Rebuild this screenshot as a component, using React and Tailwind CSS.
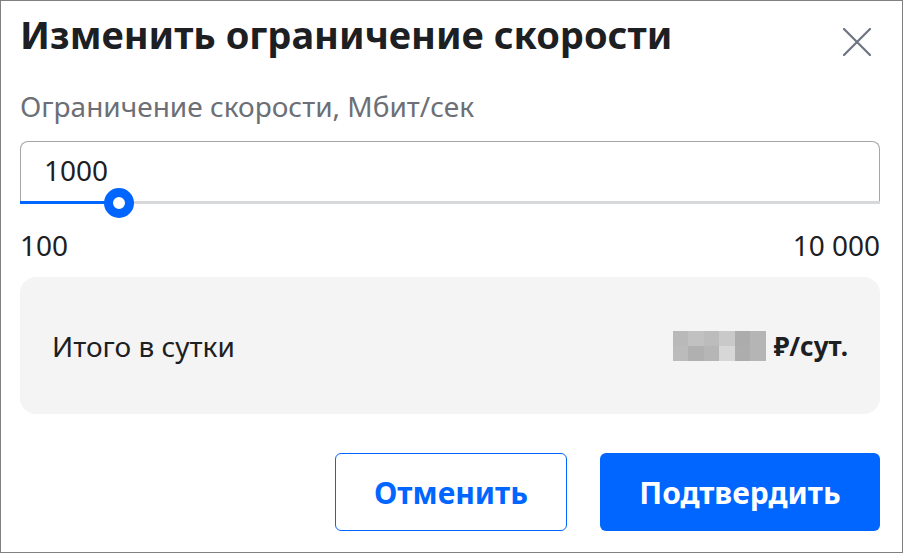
import { useState } from "react";

const BLUR = [
  ["#b9b9b9", "#c1c1c1", "#bcbcbc", "#c9c9c9", "#acacac", "#b5b5b5"],
  ["#bbbbbb", "#b0b0b0", "#b6b6b6", "#d7d7d7", "#adadad", "#b5b5b5"],
];

function CloseIcon() {
  return (
    <svg width="28" height="28" viewBox="0 0 28 28" fill="none">
      <path
        d="M1 1L27 27M27 1L1 27"
        stroke="#6e7480"
        strokeWidth="2.2"
        strokeLinecap="round"
      />
    </svg>
  );
}

export default function App() {
  const [value] = useState(1000);
  // thumb sits a little right of the linear spot in the design
  const pct = 11.5;

  return (
    <div
      className="w-[903px] h-[553px] border border-[#808080] bg-white pl-[19px] pr-[22px] text-[#1d2023]"
      style={{ fontFamily: '"Noto Sans", "Open Sans", sans-serif' }}
    >
      <header className="flex items-start justify-between pt-[11px]">
        <h1 className="text-[38px] leading-[44px] font-bold">
          Изменить ограничение скорости
        </h1>
        <button type="button" className="mt-[16px] mr-[9px]">
          <CloseIcon />
        </button>
      </header>

      <p className="mt-[34px] text-[28px] leading-[32px] text-[#6c6f75]">
        Ограничение скорости, Мбит/сек
      </p>

      <div className="mt-[19px]">
        <div className="h-[60px] rounded-t-[8px] border border-b-0 border-[#a6a6a6] px-[23px] pt-[12px] text-[28px] leading-[32px]">
          {value}
        </div>
        <div className="relative h-[3px] bg-[#d7d8da]">
          <div className="h-full bg-[#0066ff]" style={{ width: `${pct}%` }} />
          <div
            className="absolute top-1/2 h-[30px] w-[30px] -translate-x-1/2 -translate-y-1/2 rounded-full border-[9px] border-[#0066ff] bg-white"
            style={{ left: `${pct}%` }}
          />
        </div>
      </div>

      <div className="mt-[25px] flex justify-between text-[28px] leading-[32px]">
        <span>100</span>
        <span>10 000</span>
      </div>

      <div className="mt-[16px] flex h-[137px] items-center justify-between rounded-[16px] bg-[#f4f4f4] px-[32px]">
        <span className="text-[28px] leading-[32px]">Итого в сутки</span>
        <div className="flex items-center gap-[8px]">
          <div className="grid grid-cols-6">
            {BLUR.flat().map((c, i) => (
              <div key={i} className="h-[15px] w-[15.5px]" style={{ background: c }} />
            ))}
          </div>
          <span className="text-[26px] leading-[32px] font-bold">₽/сут.</span>
        </div>
      </div>

      <div className="mt-[39px] flex justify-end gap-[33px]">
        <button
          type="button"
          className="h-[78px] w-[232px] rounded-[6px] border border-[#0066ff] text-[30px] font-bold text-[#0066ff]"
        >
          Отменить
        </button>
        <button
          type="button"
          className="h-[78px] w-[280px] rounded-[6px] bg-[#0066ff] text-[30px] font-bold text-white"
        >
          Подтвердить
        </button>
      </div>
    </div>
  );
}
